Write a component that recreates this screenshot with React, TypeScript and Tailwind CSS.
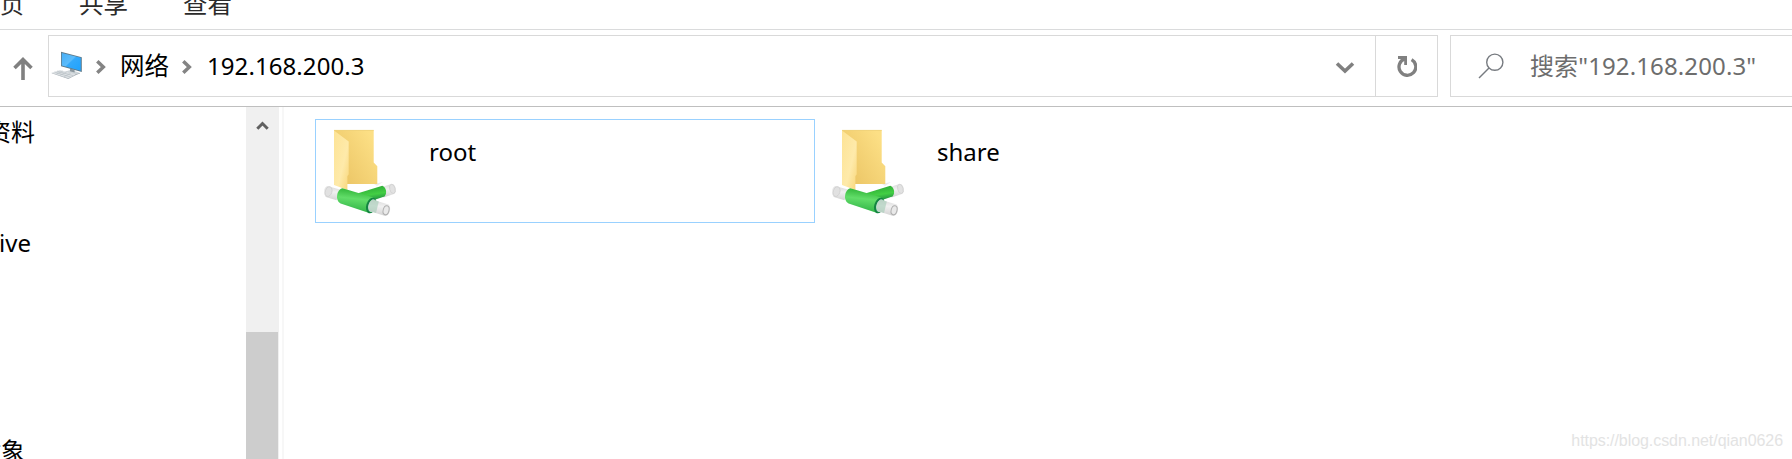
import { ReactNode } from "react";
import { clsx } from "clsx";

const tabs = ["共享", "查看"];

const NetworkComputerIcon = () => (
    <svg width="32" height="32" viewBox="0 0 32 32" className="shrink-0">
        <defs>
            <linearGradient id="screen" x1="0" y1="0" x2="1" y2="1">
                <stop offset="0" stopColor="#45adf6" />
                <stop offset="0.45" stopColor="#5cbcfb" />
                <stop offset="0.5" stopColor="#33a9fb" />
                <stop offset="1" stopColor="#1fa2fd" />
            </linearGradient>
        </defs>
        <path d="M14.5 23.4l5.5-1.6 9 3.2-5 1.6z" fill="#cdd4d8" />
        <path d="M14.5 23.4l9.5 3.2 5-1.6v.6l-5 1.6-9.5-3.2z" fill="#8e999f" />
        <path d="M19 20.5l4.6 1.3v2.7l-4.6-1.2z" fill="#8b979e" />
        <path d="M10 3.8l20.8 5.4v14.9L10 18.2z" fill="#5f7a8a" />
        <path d="M10.8 4.9l19 4.9v13L10.8 17.5z" fill="url(#screen)" />
        <path d="M.7 24.8L9 22l16 4.3-7.7 4.2z" fill="#dde1e4" />
        <path d="M.7 24.8v.5l16.6 5.8 7.7-4.2v-.6l-7.7 4z" fill="#a6afb5" />
        <path d="M3.5 24l16.2 5.1M6 23.1l16.4 4.6M5.5 26l6.3-2.9M9 27.2l6.6-3M13 28.6l6.6-3.2" stroke="#b4bcc1" strokeWidth="0.6" />
    </svg>
);

const Chevron = ({ className }: { className?: string }) => (
    <svg width="10" height="16" viewBox="0 0 10 16" fill="none" stroke="#848484" strokeWidth="3.5" className={clsx("shrink-0", className)}>
        <path d="M1.3 2.2L7.3 8l-6 5.8" />
    </svg>
);

const SharedFolderIcon = ({ id }: { id: string }) => (
    <svg width="74" height="90" viewBox="0 0 74 90" className="shrink-0">
        <defs>
            <linearGradient id={`${id}-back`} x1="0.2" y1="0.9" x2="1" y2="0.3">
                <stop offset="0" stopColor="#ecc666" />
                <stop offset="1" stopColor="#fcdf85" />
            </linearGradient>
            <linearGradient id={`${id}-flap`} x1="0" y1="0" x2="1" y2="1">
                <stop offset="0" stopColor="#fde395" />
                <stop offset="0.6" stopColor="#feeaaa" />
                <stop offset="1" stopColor="#f8d679" />
            </linearGradient>
            <linearGradient id={`${id}-pipe`} x1="0.55" y1="0.1" x2="0.42" y2="0.9">
                <stop offset="0" stopColor="#38bb40" />
                <stop offset="0.4" stopColor="#62dd69" />
                <stop offset="1" stopColor="#35b74a" />
            </linearGradient>
            <linearGradient id={`${id}-branch`} x1="0.4" y1="0.1" x2="0.6" y2="0.9">
                <stop offset="0" stopColor="#2fae38" />
                <stop offset="0.5" stopColor="#43cf44" />
                <stop offset="1" stopColor="#1c8540" />
            </linearGradient>
            <linearGradient id={`${id}-tube`} x1="0.5" y1="0" x2="0.4" y2="1">
                <stop offset="0" stopColor="#dadada" />
                <stop offset="0.4" stopColor="#f0f0f0" />
                <stop offset="1" stopColor="#d2d2d2" />
            </linearGradient>
        </defs>
        <path d="M51 56l9-2-6 4z" fill="#ededed" />
        <path d="M11 2h39.7v32.5l3.6 3.8V56H11z" fill={`url(#${id}-back)`} />
        <path d="M11 2.4h39.7" stroke="#efd17a" strokeWidth="0.8" />
        <path d="M11 2.4l14.7 11.2V46.5l-1.3 1.5v14L11 57z" fill={`url(#${id}-flap)`} />
        <path d="M58 59.3l10.5-3.4c3.8 0 6.2 6.8 3.2 9.8L60.5 69.5z" fill={`url(#${id}-tube)`} />
        <ellipse cx="69.4" cy="60.9" rx="2.7" ry="4.7" transform="rotate(-14 69.4 60.9)" fill="#e2e2e2" stroke="#cfcfcf" strokeWidth="0.7" />
        <path d="M35 65.3l24.3-7.5c3.6 1.2 5.3 7 2.2 10.8L42 75z" fill={`url(#${id}-branch)`} />
        <path d="M5 58.3l12 3.2-3.5 10.7-10-3C-.5 66 .6 58.3 5 58.3z" fill={`url(#${id}-tube)`} />
        <ellipse cx="5.6" cy="63.6" rx="3.3" ry="5" transform="rotate(18 5.6 63.6)" fill="#e1e1e1" stroke="#cdcdcd" strokeWidth="0.7" />
        <path d="M19.5 60.3L50.5 69.5l-4.4 15.6-28.5-9.5c-6.2-3.5-3.6-14.4 1.9-15.3z" fill={`url(#${id}-pipe)`} />
        <ellipse cx="48.3" cy="77.5" rx="5" ry="8.1" transform="rotate(18 48.3 77.5)" fill="#148542" />
        <ellipse cx="49.3" cy="77.7" rx="4" ry="6.6" transform="rotate(18 49.3 77.7)" fill="#9cd0b2" />
        <path d="M49.8 71.7l15.8 4.8c3.2 3 1.2 11.4-3.3 11.5L47 83.2c-2.8-3.2-1-10.2 2.8-11.5z" fill={`url(#${id}-tube)`} />
        <path d="M49.8 71.7l6 1.8-2.8 11.5-6-1.8c-2.8-3.2-1-10.2 2.8-11.5z" fill="#a3cbb5" fillOpacity="0.6" />
        <ellipse cx="63.1" cy="82.2" rx="2.9" ry="4.6" transform="rotate(14 63.1 82.2)" fill="#e9e9e9" stroke="#b0b0b0" strokeWidth="1" />
    </svg>
);

const ShareItem = ({ name, selected }: { name: string; selected?: boolean }) => (
    <div className={clsx("flex h-[104px] w-[500px] border pl-[7px] pt-[8px]", selected ? "border-[#99d1ff]" : "border-transparent")}>
        <SharedFolderIcon id={name} />
        <span className="ml-[32px] mt-[8px] h-8 leading-8">{name}</span>
    </div>
);

const TreeLabel = ({ children, className }: { children: ReactNode; className?: string }) => (
    <div className={clsx("flex h-8 shrink-0 justify-end whitespace-nowrap leading-8", className)}>{children}</div>
);

const App = () => {
    return (
        <div className="relative flex h-[459px] w-[1792px] flex-col overflow-hidden bg-white font-['Noto_Sans','Noto_Sans_CJK_SC',sans-serif] text-[24px] text-black">
            {/* ribbon tabs */}
            <div className="flex h-[30px] shrink-0 border-b border-[#dadbdc] text-[#2b2b2b]">
                <div className="-mt-[12px] flex h-8 w-[24px] justify-end leading-8">
                    <span>页</span>
                </div>
                {tabs.map((tab) => (
                    <span key={tab} className="-mt-[12px] ml-[55px] h-8 w-[49px] text-[24.5px] leading-8">{tab}</span>
                ))}
            </div>

            {/* address bar */}
            <div className="flex h-[77px] shrink-0 border-b border-[#bfbfbf] pt-[5px]">
                <div className="flex h-[62px] w-[48px] shrink-0 items-center pl-[13px]">
                    <svg width="20" height="24" viewBox="0 0 20 24" fill="none" stroke="#808080" strokeWidth="3.6" className="mt-[6px]">
                        <path d="M10 23V3M1.5 11L10 2.6l8.5 8.4" />
                    </svg>
                </div>
                <div className="flex h-[62px] w-[1390px] shrink-0 items-center border border-[#d9d9d9]">
                    <div className="-mt-[4px] ml-[2px]"><NetworkComputerIcon /></div>
                    <Chevron className="ml-[13px] mt-[2px]" />
                    <span className="ml-[14px] h-8 w-[49px] text-[24.5px] leading-8">网络</span>
                    <Chevron className="ml-[13px] mt-[2px]" />
                    <span className="ml-[15px] h-8 tracking-[0.08px] leading-8">192.168.200.3</span>
                    <svg width="20" height="14" viewBox="0 0 20 14" fill="none" stroke="#808080" strokeWidth="3.6" className="ml-auto mr-[20px] mt-[3px]">
                        <path d="M2 2.5l8 7.6 8-7.6" />
                    </svg>
                    <div className="flex h-full w-[62px] items-center justify-center border-l border-[#d9d9d9]">
                        <svg width="21" height="24" viewBox="0 0 21 24" fill="none" stroke="#808080" className="mt-[2px]">
                            <path d="M15.6 4.6A8.4 8.4 0 1 1 8.8 3.9" strokeWidth="3.3" />
                            <path d="M2 2.5h7.6V10" strokeWidth="2.8" />
                        </svg>
                    </div>
                </div>
                <div className="ml-[12px] flex h-[62px] w-[360px] shrink-0 items-center border border-[#d9d9d9] text-[#6d6d6d]">
                    <svg width="26" height="26" viewBox="0 0 26 26" fill="none" stroke="#777b80" strokeWidth="1.4" className="ml-[27px]">
                        <circle cx="16.8" cy="9.2" r="8.1" />
                        <path d="M11 15L1 25" />
                    </svg>
                    <span className="ml-[26px] h-8 tracking-[0.12px] leading-8">搜索"192.168.200.3"</span>
                </div>
            </div>

            <div className="flex min-h-0 flex-1">
                {/* navigation tree */}
                <div className="w-[246px] shrink-0 overflow-hidden">
                    <div className="flex w-[35px] flex-col">
                        <TreeLabel className="mt-[9px]">资料</TreeLabel>
                        <TreeLabel className="mt-[79px] pr-[4px]">OneDrive</TreeLabel>
                        <TreeLabel className="mt-[176px] pr-[10px]">3D 对象</TreeLabel>
                    </div>
                </div>
                <div className="flex w-[33px] shrink-0 flex-col bg-[#f0f0f0]">
                    <svg width="33" height="225" viewBox="0 0 33 225" fill="none" stroke="#606060" strokeWidth="3" className="shrink-0">
                        <path d="M11.3 21.7l5.2-5.2 5.2 5.2" />
                    </svg>
                    <div className="w-[32px] flex-1 bg-[#cdcdcd]" />
                </div>
                <div className="ml-[3px] w-[2px] shrink-0 bg-[#f7f7f7]" />

                {/* shares */}
                <div className="flex gap-[8px] pl-[31px] pt-[12px]">
                    <ShareItem name="root" selected />
                    <ShareItem name="share" />
                </div>
            </div>

            <span className="absolute bottom-[8px] right-[9px] font-['Liberation_Sans',Arial,sans-serif] text-[16px] leading-5 tracking-[-0.06px] text-[#e3e3e3]">
                https://blog.csdn.net/qian0626
            </span>
        </div>
    );
};

export default App;
